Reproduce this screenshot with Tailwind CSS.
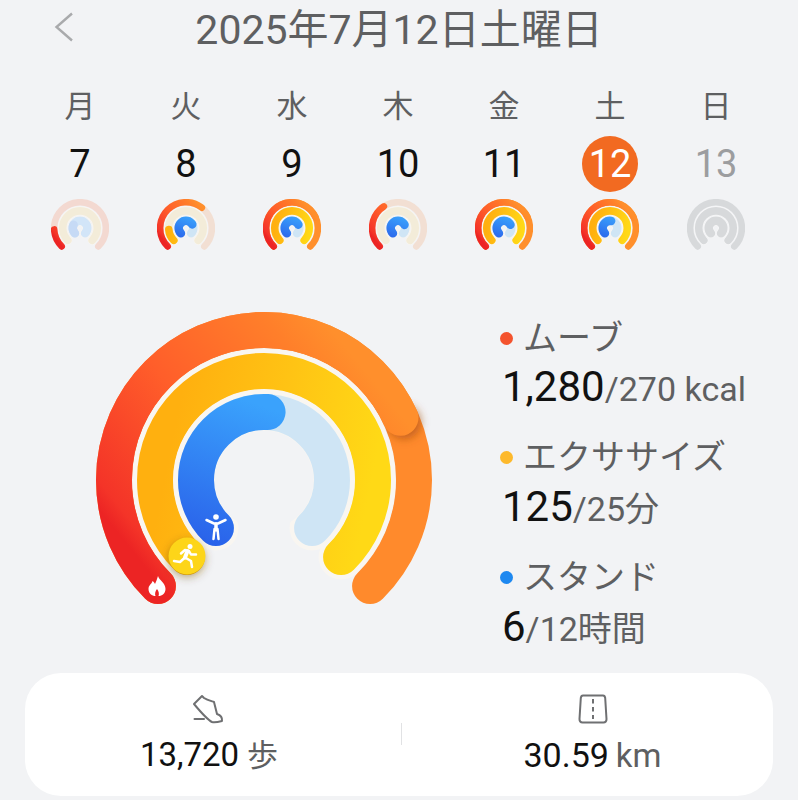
<!doctype html>
<html lang="ja">
<head>
<meta charset="utf-8">
<script src="https://cdn.jsdelivr.net/npm/@tailwindcss/browser@4"></script>
</head>
<body class="bg-[#f2f3f5]">
<svg class="absolute w-0 h-0" aria-hidden="true">
  <defs>
    <linearGradient id="gr" gradientUnits="userSpaceOnUse" x1="-100" y1="110" x2="129" y2="-75">
      <stop offset="0" stop-color="#ec2424"/><stop offset="0.06" stop-color="#f43428"/><stop offset="0.45" stop-color="#ff5e2a"/><stop offset="0.85" stop-color="#ff7f2a"/><stop offset="1" stop-color="#ff8f2c"/>
    </linearGradient>
    <linearGradient id="gy" gradientUnits="userSpaceOnUse" x1="-100" y1="0" x2="100" y2="40">
      <stop offset="0" stop-color="#ffb00f"/><stop offset="0.5" stop-color="#ffc314"/><stop offset="1" stop-color="#ffd916"/>
    </linearGradient>
    <linearGradient id="gb" gradientUnits="userSpaceOnUse" x1="-40" y1="70" x2="10" y2="-70">
      <stop offset="0" stop-color="#2a62ea"/><stop offset="1" stop-color="#3aa2fc"/>
    </linearGradient>
    <filter id="bl" x="-50%" y="-50%" width="200%" height="200%"><feGaussianBlur stdDeviation="4"/></filter>
    <path id="a1" pathLength="270" d="M-106.07 106.07A150 150 0 1 1 106.07 106.07"/>
    <path id="a2" pathLength="270" d="M-77.07 77.07A109 109 0 1 1 77.07 77.07"/>
    <path id="a3" pathLength="270" d="M-48.08 48.08A68 68 0 1 1 48.08 48.08"/>
    <path id="m1" pathLength="270" stroke-width="38" d="M-106.07 106.07A150 150 0 1 1 106.07 106.07"/>
    <path id="m2" pathLength="270" stroke-width="44" d="M-70.71 70.71A100 100 0 1 1 70.71 70.71"/>
    <path id="m3" pathLength="270" stroke-width="50" d="M-29.7 29.7A42 42 0 1 1 29.7 29.7"/>
    <path id="h2" stroke-width="52" d="M-70.71 70.71A100 100 0 1 1 70.71 70.71"/>
    <path id="h3" stroke-width="56" d="M-29.7 29.7A42 42 0 1 1 29.7 29.7"/>
  </defs>
</svg>
<main class="w-[798px] h-[800px] overflow-hidden flex flex-col font-['Roboto','Noto_Sans_CJK_JP',sans-serif]">
  <header class="relative h-[60px] flex items-center justify-center text-[41px] leading-[60px] text-[#5e5f61]">
    <svg class="absolute left-[54px] top-[12px]" width="20" height="30" viewBox="0 0 20 30" fill="none" stroke="#a9aaac" stroke-width="2.4"><path d="M18 1.500 2.500 15 18 28.500"/></svg>
    <h1 class="font-normal">2025年7月12日土曜日</h1>
  </header>

  <section class="grid grid-cols-7 ml-[27px] mr-[29px] mt-[24px] text-center">
    <div class="flex flex-col items-center">
      <div class="h-[46px] leading-[46px] text-[31px] text-[#5e5f61]">月</div>
      <div class="mt-[5px] h-[58px] leading-[58px] text-[38px] text-[#111]">7</div>
      <svg class="mt-[6px]" width="58" height="52" viewBox="-168 -168 336 300" fill="none" stroke-linecap="round">
        <use href="#m1" stroke="#f3d9d1"/><use href="#m1" stroke="url(#gr)" stroke-dasharray="42 999"/>
        <use href="#h2" stroke="#f9f6f1"/><use href="#m2" stroke="#f3ecd9"/>
        <use href="#h3" stroke="#f9f6f1"/><use href="#m3" stroke="#d2e5f8"/><use href="#m3" stroke="#c6daf5" stroke-dasharray="70 999"/>
      </svg>
    </div>
    <div class="flex flex-col items-center">
      <div class="h-[46px] leading-[46px] text-[31px] text-[#5e5f61]">火</div>
      <div class="mt-[5px] h-[58px] leading-[58px] text-[38px] text-[#111]">8</div>
      <svg class="mt-[6px]" width="58" height="52" viewBox="-168 -168 336 300" fill="none" stroke-linecap="round">
        <use href="#m1" stroke="#f2dfd3"/><use href="#m1" stroke="url(#gr)" stroke-dasharray="172 999"/>
        <use href="#h2" stroke="#f9f6f1"/><use href="#m2" stroke="#f3ecd9"/><use href="#m2" stroke="url(#gy)" stroke-dasharray="40 999"/>
        <use href="#h3" stroke="#f9f6f1"/><use href="#m3" stroke="#cfe5f5"/><use href="#m3" stroke="url(#gb)" stroke-dasharray="190 999"/>
      </svg>
    </div>
    <div class="flex flex-col items-center">
      <div class="h-[46px] leading-[46px] text-[31px] text-[#5e5f61]">水</div>
      <div class="mt-[5px] h-[58px] leading-[58px] text-[38px] text-[#111]">9</div>
      <svg class="mt-[6px]" width="58" height="52" viewBox="-168 -168 336 300" fill="none" stroke-linecap="round">
        <use href="#m1" stroke="#ff8f2c"/><use href="#m1" stroke="url(#gr)" stroke-dasharray="200 999"/>
        <use href="#h2" stroke="#f9f6f1"/><use href="#m2" stroke="url(#gy)"/>
        <use href="#h3" stroke="#f9f6f1"/><use href="#m3" stroke="#cfe5f5"/><use href="#m3" stroke="url(#gb)" stroke-dasharray="192 999"/>
      </svg>
    </div>
    <div class="flex flex-col items-center">
      <div class="h-[46px] leading-[46px] text-[31px] text-[#5e5f61]">木</div>
      <div class="mt-[5px] h-[58px] leading-[58px] text-[38px] text-[#111]">10</div>
      <svg class="mt-[6px]" width="58" height="52" viewBox="-168 -168 336 300" fill="none" stroke-linecap="round">
        <use href="#m1" stroke="#f2dfd3"/><use href="#m1" stroke="url(#gr)" stroke-dasharray="102 999"/>
        <use href="#h2" stroke="#f9f6f1"/><use href="#m2" stroke="#f3ecd9"/>
        <use href="#h3" stroke="#f9f6f1"/><use href="#m3" stroke="#cfe5f5"/><use href="#m3" stroke="url(#gb)" stroke-dasharray="194 999"/>
      </svg>
    </div>
    <div class="flex flex-col items-center">
      <div class="h-[46px] leading-[46px] text-[31px] text-[#5e5f61]">金</div>
      <div class="mt-[5px] h-[58px] leading-[58px] text-[38px] text-[#111]">11</div>
      <svg class="mt-[6px]" width="58" height="52" viewBox="-168 -168 336 300" fill="none" stroke-linecap="round">
        <use href="#m1" stroke="#ff8f2c"/><use href="#m1" stroke="url(#gr)" stroke-dasharray="200 999"/>
        <use href="#h2" stroke="#f9f6f1"/><use href="#m2" stroke="url(#gy)"/>
        <use href="#h3" stroke="#f9f6f1"/><use href="#m3" stroke="#cfe5f5"/><use href="#m3" stroke="url(#gb)" stroke-dasharray="193 999"/>
      </svg>
    </div>
    <div class="flex flex-col items-center">
      <div class="h-[46px] leading-[46px] text-[31px] text-[#5e5f61]">土</div>
      <div class="mt-[5px] h-[58px] leading-[58px] text-[38px] text-white flex items-center justify-center"><span class="w-[56px] h-[56px] rounded-full bg-[#f26a21] flex items-center justify-center">12</span></div>
      <svg class="mt-[6px]" width="58" height="52" viewBox="-168 -168 336 300" fill="none" stroke-linecap="round">
        <use href="#m1" stroke="#ff8f2c"/><use href="#m1" stroke="url(#gr)" stroke-dasharray="200 999"/>
        <use href="#h2" stroke="#f9f6f1"/><use href="#m2" stroke="url(#gy)"/>
        <use href="#h3" stroke="#f9f6f1"/><use href="#m3" stroke="#cfe5f5"/><use href="#m3" stroke="url(#gb)" stroke-dasharray="140 999"/>
      </svg>
    </div>
    <div class="flex flex-col items-center">
      <div class="h-[46px] leading-[46px] text-[31px] text-[#5e5f61]">日</div>
      <div class="mt-[5px] h-[58px] leading-[58px] text-[38px] text-[#9c9d9f]">13</div>
      <svg class="mt-[6px]" width="58" height="52" viewBox="-168 -168 336 300" fill="none" stroke-linecap="round">
        <use href="#m1" stroke="#d7d9db"/>
        <use href="#h2" stroke="#f7f7f8"/><use href="#m2" stroke="#d7d9db"/>
        <use href="#h3" stroke="#f7f7f8"/><use href="#m3" stroke="#d7d9db"/>
      </svg>
    </div>
  </section>

  <section class="flex items-start mt-[61px] ml-[96px] h-[361px]">
    <svg width="336" height="300" viewBox="-168 -168 336 300" fill="none" stroke-linecap="round" stroke-width="36">
      <use href="#a1" stroke="#ff8a2c"/>
      <circle cx="140" cy="-58" r="17" fill="#a04a10" fill-opacity="0.6" filter="url(#bl)"/>
      <use href="#a1" stroke="url(#gr)" stroke-dasharray="200.5 999"/>
      <use href="#a2" stroke="#f9f6f1" stroke-width="45"/>
      <use href="#a2" stroke="url(#gy)"/>
      <use href="#a3" stroke="#f9f6f1" stroke-width="45"/>
      <circle cx="0" cy="0" r="49.500" fill="#f2f3f5"/>
      <use href="#a3" stroke="#cfe5f5"/>
      <use href="#a3" stroke="url(#gb)" stroke-dasharray="138 999"/>
      <circle cx="-77" cy="79" r="18.5" fill="#5c4300" fill-opacity="0.45" filter="url(#bl)"/>
      <circle cx="-77" cy="76" r="18.5" fill="#fdd519"/>
      <path transform="translate(-107 106)" fill="#fff" d="M1-10C2-6 8.500-3 8.500 3 8.500 7.500 5 10 1.500 10 2.500 7.500 1.500 5 0 3-1.500 5-2.500 7.500-1.500 10-5 10-8.500 7.500-8.500 3-8.500-1-5.500-1.500-4.500-5-3-4-2.500-3-2-2-1-4 0-7 1-10Z"/>
      <g transform="translate(-78 76)" stroke="#fff" stroke-width="2.500" stroke-linecap="round" stroke-linejoin="round">
        <circle cx="4" cy="-9.500" r="2.500" fill="#fff" stroke="none"/>
        <path stroke-width="4" d="M1.500-5-1 1.500"/>
        <path d="M-5-2.500-1-6 3-5 5-1.500 10-1.500M-1 1.500-6 6-12 5M-1 1.500 5 5 6 11"/>
      </g>
      <g transform="translate(-48 47)" stroke="#fff" stroke-width="2.500" stroke-linecap="round" stroke-linejoin="round">
        <circle cx="0" cy="-10" r="2.800" fill="#fff" stroke="none"/>
        <path d="M-9.500-7-2-3.500H2L9.500-7"/>
        <path stroke-width="3.500" d="M0-3V3"/>
        <path d="M-1.500 2-2.500 12M1.500 2 2.500 12"/>
      </g>
    </svg>
    <div class="ml-[70px] flex flex-col">
      <div class="flex items-center h-[52px] text-[34px] text-[#5e5f61]"><span class="w-[13px] h-[13px] rounded-full bg-[#f4532e] ml-[-2px] mr-[10px]"></span>ムーブ</div>
      <div class="-mt-[4px] flex items-baseline h-[54px] leading-[54px] text-[42px] text-[#111]">1,280<span class="text-[34px] text-[#5e5f61]">/270 kcal</span></div>
      <div class="flex items-center h-[52px] mt-[17px] text-[34px] text-[#5e5f61]"><span class="w-[13px] h-[13px] rounded-full bg-[#fdb92c] ml-[-2px] mr-[10px]"></span>エクササイズ</div>
      <div class="-mt-[3px] flex items-baseline h-[54px] leading-[54px] text-[42px] text-[#111]">125<span class="text-[34px] text-[#5e5f61]">/25分</span></div>
      <div class="flex items-center h-[52px] mt-[17px] text-[34px] text-[#5e5f61]"><span class="w-[13px] h-[13px] rounded-full bg-[#1e88f0] ml-[-2px] mr-[10px]"></span>スタンド</div>
      <div class="-mt-[3px] flex items-baseline h-[54px] leading-[54px] text-[42px] text-[#111]">6<span class="text-[34px] text-[#5e5f61]">/12時間</span></div>
    </div>
  </section>

  <section class="mx-[25px] h-[123px] rounded-[36px] bg-white flex items-stretch relative">
    <div class="w-[376px] pr-[8px] flex flex-col items-center pt-[21px]">
      <svg width="34" height="30" viewBox="0 0 34 30" fill="none" stroke="#6f7072" stroke-width="2" stroke-linejoin="round" stroke-linecap="round">
        <path d="M2 10 10 2 12 4C15 6 19 7 22 8L25 20C28 21 30.500 23 30 27 26 28 22 28.500 20 28 16 26 7 16 2 10Z"/>
        <path d="M2.500 25H12"/>
      </svg>
      <div class="mt-[9px] h-[44px] leading-[44px] text-[33px] text-[#111] flex items-baseline gap-[8px]">13,720<span class="text-[31px] text-[#5e5f61]">歩</span></div>
    </div>
    <span class="self-start mt-[50px] w-px h-[22px] bg-[#e1e2e4]"></span>
    <div class="flex-1 pl-[10px] flex flex-col items-center pt-[21px]">
      <svg width="30" height="30" viewBox="0 0 30 30" fill="none" stroke="#6f7072" stroke-width="2" stroke-linejoin="round">
        <path d="M5 1.500H25C26.500 1.500 27 2.500 27.200 4L28.500 25C28.600 27 27.500 28.500 25.500 28.500H4.500C2.500 28.500 1.400 27 1.500 25L2.800 4C3 2.500 3.500 1.500 5 1.500Z"/>
        <path d="M15 5V25" stroke-dasharray="4.500 3.500"/>
      </svg>
      <div class="mt-[9px] h-[44px] leading-[44px] text-[34px] text-[#111] flex items-baseline gap-[7px]">30.59<span class="text-[33px] text-[#5e5f61]">km</span></div>
    </div>
  </section>
</main>
</body>
</html>
